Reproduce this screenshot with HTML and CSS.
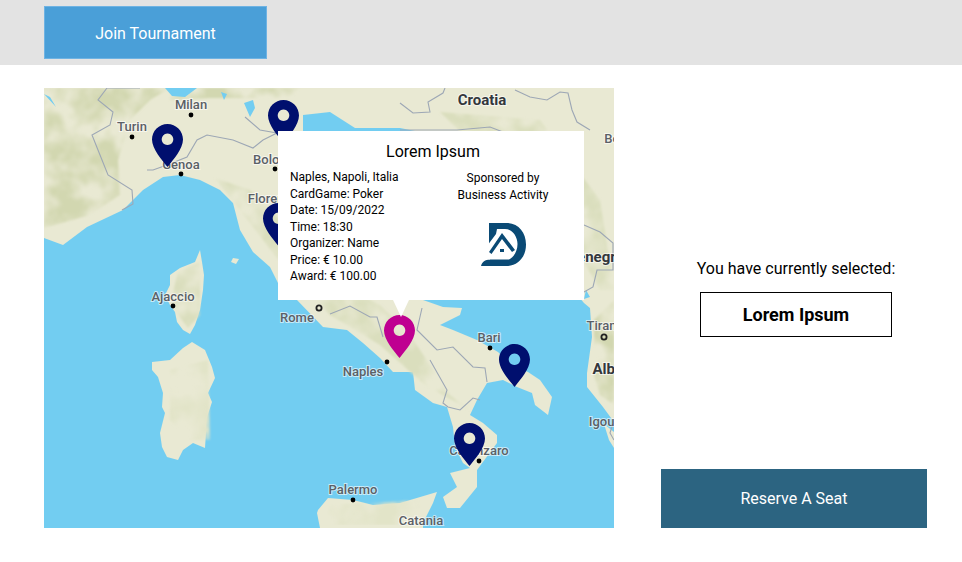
FILE: index.html
```html
<!DOCTYPE html>
<html lang="en">
<head>
<meta charset="utf-8">
<title>Join Tournament</title>
<link rel="stylesheet" href="styles.css">
</head>
<body>
<header class="topbar">
  <button class="join-btn" type="button">Join Tournament</button>
</header>
<main class="content">
  <section class="map">
    <svg class="map-art" viewBox="44 88 570 440" width="570" height="440" aria-label="Map of Italy">
      <defs>
        <filter id="hills" x="0" y="0" width="100%" height="100%">
          <feTurbulence type="fractalNoise" baseFrequency="0.035" numOctaves="3" seed="7" result="n"/>
          <feColorMatrix in="n" type="matrix" values="0 0 0 0 0  0 0 0 0 0  0 0 0 0 0  3.2 0 0 0 -1.05" result="a"/>
          <feComposite in="SourceGraphic" in2="a" operator="in"/>
          <feGaussianBlur stdDeviation="0.8"/>
        </filter>
        <filter id="edge" x="-5%" y="-5%" width="110%" height="110%"><feGaussianBlur stdDeviation="0.4"/></filter>
      </defs>
      <rect class="water" x="44" y="88" width="570" height="440"/>
      <g filter="url(#edge)">
        <path class="land" d="M44 88H614V422L603 407 587 387 587 373 592 337 590 308 584 303 540 250 460 170 420 132 400 128 355 128 330 112 303 115 303 133 320 145 340 170 370 210 400 270 423 300 443 307 462 308 460 315 440 325 453 330 477 340 498 352 512 366 528 372 540 380 552 397 548 415 535 405 532 393 517 387 503 380 487 383 477 400 470 415 483 423 497 435 497 443 477 470 477 487 460 508 447 508 443 497 457 487 450 473 470 468 463 463 455 447 453 427 447 407 433 403 415 390 413 372 393 372 380 358 363 343 347 330 323 327 297 300 278 283 270 267 253 252 240 230 233 203 220 190 200 180 180 175 163 177 143 190 123 210 87 227 75 236 63 245 44 238Z"/>
        <path class="land" d="M604 424 614 432V448L609 440Z"/>
        <path class="land" d="M318 510 328 498 353 500 373 505 400 503 437 492 433 503 423 523 423 528H320L317 513Z"/>
        <path class="land" d="M192 342 205 350 212 367 215 378 208 393 212 402 207 417 205 448 193 443 183 450 178 460 167 457 162 447 160 433 165 413 162 407 163 393 158 377 152 370 152 362 170 360 183 348Z"/>
        <path class="land" d="M200 250 202 262 204 275 203 290 200 310 195 325 190 334 183 330 177 322 175 312 170 305 165 295 170 285 170 275 180 268 195 262Z"/>
        <path class="land" d="M233 258 239 259 236 264 231 262Z"/>
      </g>
      <g filter="url(#hills)">
        <path class="shade" d="M44 88H170L150 100 130 120 118 160 120 195 90 215 44 228Z"/>
        <path class="shade" d="M170 88H300L290 98 210 98 170 100Z"/>
        <path class="shade" d="M594 320 614 300V405L600 395 594 375Z"/>
        <path class="shade-soft" d="M215 178 250 190 290 230 330 280 380 305 410 335 450 395 470 410 425 385 380 345 330 315 280 262 240 210Z"/>
        <path class="shade-soft" d="M440 112 540 120 600 200 614 290 600 290 560 220 500 170Z"/>
        <path class="shade-soft" d="M178 272 200 262 200 315 188 328 176 312 172 296Z"/>
        <path class="shade-faint" d="M170 370 208 360 210 440 188 440 170 420Z"/>
        <path class="shade-faint" d="M330 505 420 500 420 525 325 525Z"/>
      </g>
      <path class="water" d="M165 88 172 96 185 97 197 88ZM221 92 224 100 227 94ZM244 103 250 117 255 108 253 100ZM44 94 56 107 50 97ZM590 297 586 290 584 299Z"/>
      <g class="borders">
        <path d="M140 88H107L98 100 113 112 110 125 92 135 98 150 108 175 132 190 133 204 122 210"/>
        <path d="M147 170 153 170 167 165 187 157 197 140 207 135 233 140 253 148 263 140 277 133M245 117 260 130 277 133"/>
        <path d="M400 103 413 113 430 112 428 102 443 93 445 88"/>
        <path d="M515 90 530 97 547 100 560 92 568 93 572 110 577 122 590 130"/>
        <path d="M400 130 457 130 490 127 503 132"/>
        <path d="M584 225 600 232 613 243V270H597L593 287 584 292"/>
        <path d="M330 314 350 306 370 317 377 317 383 337M422 308 417 330 437 350 453 347 473 367 485 368 487 382M430 360 447 390 443 403 448 407 460 410 473 398 480 400"/>
        <path d="M613 423 610 433 614 440"/>
      </g>
      <g class="dots">
        <circle cx="191" cy="115" r="2.4"/><circle cx="132" cy="137" r="2.4"/><circle cx="181" cy="174" r="2.4"/>
        <circle cx="275" cy="169" r="2.4"/><circle cx="387" cy="362" r="2.4"/><circle cx="490" cy="348" r="2.4"/>
        <circle cx="479" cy="461" r="2.4"/><circle cx="353" cy="500" r="2.4"/><circle cx="173" cy="306" r="2.4"/>
      </g>
      <g class="targets">
        <circle cx="319" cy="308" r="2.6"/><circle cx="604" cy="337" r="2.6"/>
      </g>
      <g class="labels">
        <text x="191" y="109">Milan</text><text x="132" y="131">Turin</text><text x="181" y="169">Genoa</text>
        <text x="277" y="164">Bologna</text><text x="273" y="203">Florence</text><text x="297" y="322">Rome</text>
        <text x="363" y="376">Naples</text><text x="489" y="342">Bari</text><text x="479" y="455">Catanzaro</text>
        <text x="353" y="494">Palermo</text><text x="421" y="525">Catania</text><text x="173" y="301">Ajaccio</text>
        <text x="605" y="330">Tirana</text><text x="625" y="426">Igoumenitsa</text><text x="630" y="143">Belgrade</text>
        <text class="country" x="482" y="105">Croatia</text><text class="country" x="583" y="262">Montenegro</text>
        <text class="country" x="618" y="374">Albania</text>
      </g>
      <g class="navy">
        <path fill-rule="evenodd" transform="translate(152 124)" d="M15.500 0C7 0 0 7 0 15.500 0 25 10 36 15.500 43 21 36 31 25 31 15.500 31 7 24 0 15.500 0ZM15.500 9.500a5.800 5.800 0 1 0 .01 0Z"/>
        <path fill-rule="evenodd" transform="translate(268 100)" d="M15.500 0C7 0 0 7 0 15.500 0 25 10 36 15.500 43 21 36 31 25 31 15.500 31 7 24 0 15.500 0ZM15.500 9.500a5.800 5.800 0 1 0 .01 0Z"/>
        <path fill-rule="evenodd" transform="translate(263 203)" d="M15.500 0C7 0 0 7 0 15.500 0 25 10 36 15.500 43 21 36 31 25 31 15.500 31 7 24 0 15.500 0ZM15.500 9.500a5.800 5.800 0 1 0 .01 0Z"/>
        <path fill-rule="evenodd" transform="translate(499 344)" d="M15.500 0C7 0 0 7 0 15.500 0 25 10 36 15.500 43 21 36 31 25 31 15.500 31 7 24 0 15.500 0ZM15.500 9.500a5.800 5.800 0 1 0 .01 0Z"/>
        <path fill-rule="evenodd" transform="translate(454 423)" d="M15.500 0C7 0 0 7 0 15.500 0 25 10 36 15.500 43 21 36 31 25 31 15.500 31 7 24 0 15.500 0ZM15.500 9.500a5.800 5.800 0 1 0 .01 0Z"/>
      </g>
      <path class="pin-active" fill-rule="evenodd" transform="translate(384 315)" d="M15.500 0C7 0 0 7 0 15.500 0 25 10 36 15.500 43 21 36 31 25 31 15.500 31 7 24 0 15.500 0ZM15.500 9.500a5.800 5.800 0 1 0 .01 0Z"/>
    </svg>
    <div class="popup">
      <h2 class="popup-title">Lorem Ipsum</h2>
      <div class="popup-body">
        <ul class="details">
          <li>Naples, Napoli, Italia</li>
          <li>CardGame: Poker</li>
          <li>Date: 15/09/2022</li>
          <li>Time: 18:30</li>
          <li>Organizer: Name</li>
          <li>Price: € 10.00</li>
          <li>Award: € 100.00</li>
        </ul>
        <div class="sponsor">
          <p class="sponsor-text">Sponsored by<br>Business Activity</p>
          <svg class="logo" viewBox="482 222 45 43" width="45" height="43" aria-label="Logo">
            <path class="logo-d" d="M490 222H507C519 222 527 231 527 243.500 527 256 519 265 507 265H482C483 261 486 258.500 491 258.500L490 240Z"/>
            <path class="logo-w" d="M498 228H506C513 228 518.500 235 518.500 243 518.500 250 515 256 510 258.500H488V245L497 233Z"/>
            <path class="logo-d" d="M490 251 503 232 516 249 513 251 503 238 492.500 253Z"/>
            <rect class="logo-d" x="501" y="248" width="4" height="3"/>
          </svg>
        </div>
      </div>
    </div>
  </section>
  <aside class="side">
    <p class="selected-label">You have currently selected:</p>
    <div class="selected-box">Lorem Ipsum</div>
    <button class="reserve-btn" type="button">Reserve A Seat</button>
  </aside>
</main>
</body>
</html>
```
FILE: styles.css
```css
* { box-sizing: border-box; }
html, body { margin: 0; padding: 0; }
body {
  width: 962px;
  height: 562px;
  overflow: hidden;
  background: #fff;
  color: #000;
  font-family: Roboto, "Liberation Sans", sans-serif;
}
.topbar {
  height: 65px;
  padding: 6px 0 0 44px;
  background: #e3e3e3;
}
.join-btn {
  display: block;
  width: 223px;
  height: 53px;
  padding-top: 2px;
  border: 1px solid #6fb3e3;
  background: #4a9fd8;
  color: #fff;
  font: 400 16px Roboto, sans-serif;
}
.content {
  display: flex;
  padding: 23px 0 0 44px;
}
.map {
  position: relative;
  flex: none;
  width: 570px;
  height: 440px;
}
.map-art { display: block; }
.water { fill: #72cdf1; }
.land { fill: #e9e9d3; }
.shade { fill: #d2d7b0; }
.shade-soft { fill: #dadebd; }
.shade-faint { fill: #e2e4c8; }
.borders path {
  fill: none;
  stroke: #9da7b5;
  stroke-width: 1.1;
}
.dots circle { fill: #000; }
.targets circle { fill: none; stroke: #222; stroke-width: 1.8; }
.labels text {
  fill: #5b6066;
  font: 500 13px Roboto, sans-serif;
  text-anchor: middle;
  stroke: #fff;
  stroke-width: 2px;
  stroke-opacity: .6;
  paint-order: stroke;
}
.labels .country {
  fill: #33373c;
  font-size: 15px;
  font-weight: 700;
}
.navy path { fill: #000f6e; }
.pin-active { fill: #bf0091; }
.popup {
  position: absolute;
  left: 234px;
  top: 43px;
  width: 306px;
  height: 169px;
  background: #fff;
}
.popup::after {
  content: "";
  position: absolute;
  left: 115px;
  top: 169px;
  border-left: 8px solid transparent;
  border-right: 8px solid transparent;
  border-top: 17px solid #fff;
}
.popup-title {
  margin: 0;
  padding: 11px 0 0 4px;
  font-size: 16px;
  font-weight: 400;
  line-height: 19px;
  text-align: center;
}
.popup-body {
  display: grid;
  grid-template-columns: 135px 156px;
  padding: 0 3px 0 12px;
}
.details {
  margin: 0;
  padding: 8px 0 0;
  list-style: none;
  font-size: 12px;
  line-height: 16.5px;
}
.sponsor {
  display: flex;
  flex-direction: column;
  align-items: center;
  padding-top: 9px;
}
.sponsor-text {
  margin: 0;
  font-size: 12px;
  line-height: 17px;
  text-align: center;
}
.logo { margin: 19px 0 0 1px; }
.logo-d { fill: #0a4a75; }
.logo-w { fill: #fff; }
.side {
  display: flex;
  flex-direction: column;
  align-items: center;
  flex: none;
  width: 270px;
  height: 440px;
  margin-left: 47px;
}
.selected-label {
  margin: 171px 0 0;
  font-size: 16px;
  line-height: 19px;
}
.selected-box {
  display: flex;
  align-items: center;
  justify-content: center;
  width: 192px;
  height: 45px;
  margin-top: 14px;
  border: 1px solid #000;
  font-size: 18px;
  font-weight: 700;
}
.reserve-btn {
  align-self: flex-start;
  width: 266px;
  height: 59px;
  margin-top: auto;
  border: 0;
  background: #2c6481;
  color: #fff;
  font: 400 16px Roboto, sans-serif;
}
```
